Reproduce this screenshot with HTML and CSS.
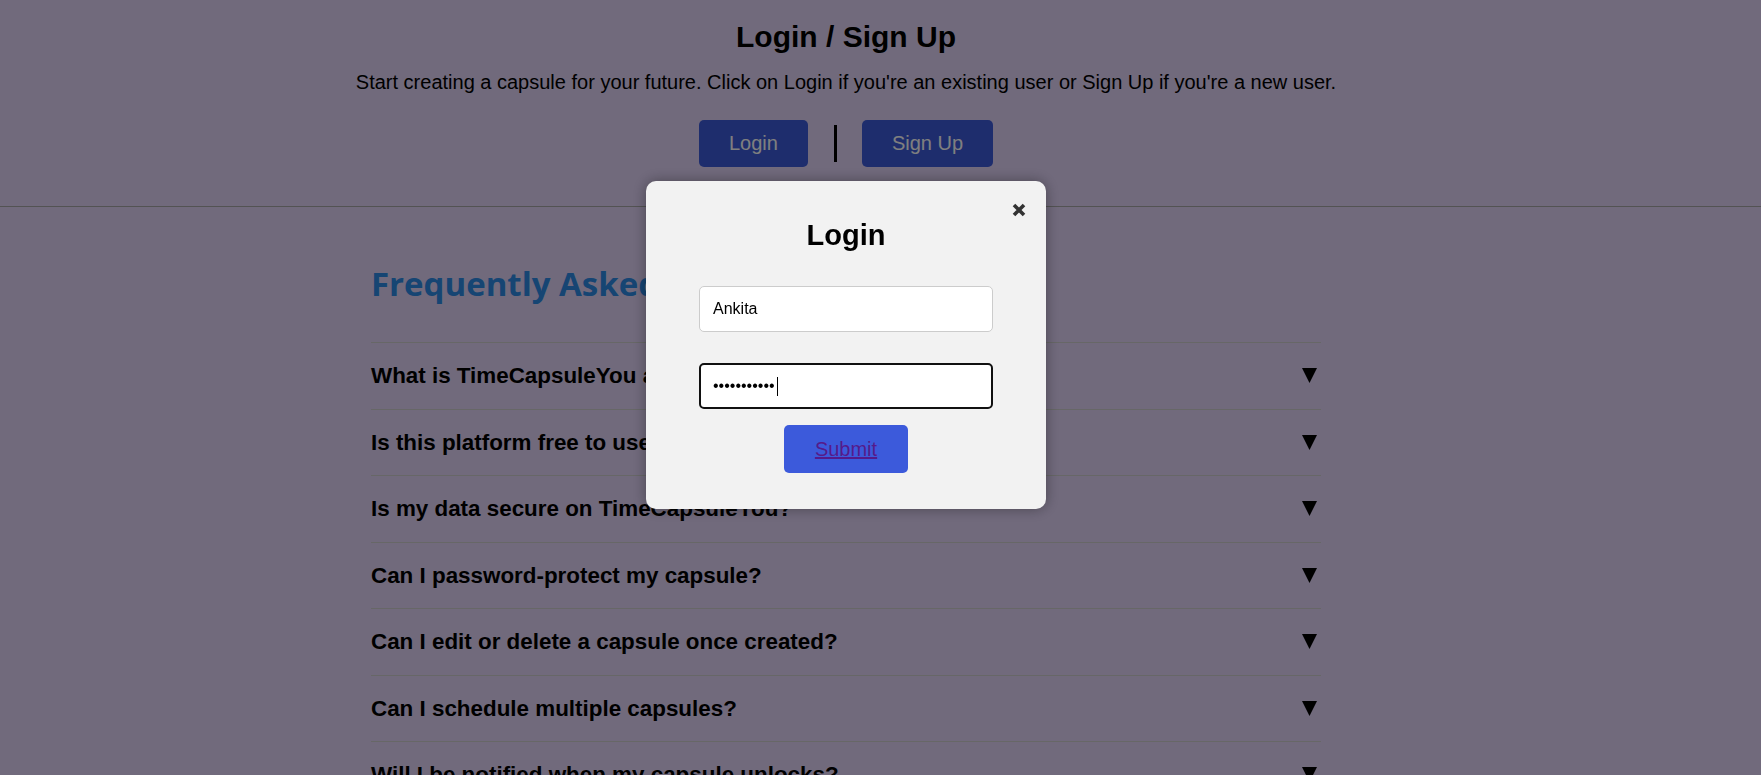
FILE: index.html
```html
<!DOCTYPE html>
<html lang="en">
<head>
<meta charset="utf-8">
<title>TimeCapsuleYou - Login / Sign Up</title>
<link rel="stylesheet" href="styles.css">
</head>
<body>
<div class="page-col">
  <header class="auth">
    <h1 class="auth-title">Login / Sign Up</h1>
    <p class="auth-text">Start creating a capsule for your future. Click on Login if you're an existing user or Sign Up if you're a new user.</p>
    <div class="auth-actions">
      <button class="btn" type="button">Login</button>
      <span class="divider"></span>
      <button class="btn" type="button">Sign Up</button>
    </div>
  </header>
</div>
<hr class="rule">
<div class="page-col">
  <section class="faq">
    <h2 class="faq-title">Frequently Asked Questions</h2>
    <div class="faq-item"><span class="faq-q">What is TimeCapsuleYou and how does it work?</span><svg class="faq-arrow" viewBox="0 0 15 15" width="15" height="15"><polygon points="0,0 15,0 7.5,15" fill="#000"/></svg></div>
    <div class="faq-item"><span class="faq-q">Is this platform free to use?</span><svg class="faq-arrow" viewBox="0 0 15 15" width="15" height="15"><polygon points="0,0 15,0 7.5,15" fill="#000"/></svg></div>
    <div class="faq-item"><span class="faq-q">Is my data secure on TimeCapsuleYou?</span><svg class="faq-arrow" viewBox="0 0 15 15" width="15" height="15"><polygon points="0,0 15,0 7.5,15" fill="#000"/></svg></div>
    <div class="faq-item"><span class="faq-q">Can I password-protect my capsule?</span><svg class="faq-arrow" viewBox="0 0 15 15" width="15" height="15"><polygon points="0,0 15,0 7.5,15" fill="#000"/></svg></div>
    <div class="faq-item"><span class="faq-q">Can I edit or delete a capsule once created?</span><svg class="faq-arrow" viewBox="0 0 15 15" width="15" height="15"><polygon points="0,0 15,0 7.5,15" fill="#000"/></svg></div>
    <div class="faq-item"><span class="faq-q">Can I schedule multiple capsules?</span><svg class="faq-arrow" viewBox="0 0 15 15" width="15" height="15"><polygon points="0,0 15,0 7.5,15" fill="#000"/></svg></div>
    <div class="faq-item"><span class="faq-q">Will I be notified when my capsule unlocks?</span><svg class="faq-arrow" viewBox="0 0 15 15" width="15" height="15"><polygon points="0,0 15,0 7.5,15" fill="#000"/></svg></div>
  </section>
</div>

<div class="overlay">
  <div class="modal-frame">
    <div class="modal">
      <button class="modal-close" type="button" aria-label="Close">
        <svg viewBox="0 0 14 14" width="14" height="14"><path d="M2 2 L12 12 M12 2 L2 12" stroke="#333" stroke-width="3.6" stroke-linecap="butt"/></svg>
      </button>
      <h2 class="modal-title">Login</h2>
      <form class="modal-form">
        <input class="field" type="text" value="Ankita">
        <div class="field-wrap">
          <input class="field field-focused" type="password" value="abcdefghijk">
          <span class="caret"></span>
        </div>
        <button class="submit" type="button"><a class="submit-link" href="#">Submit</a></button>
      </form>
    </div>
  </div>
</div>
</body>
</html>
```

FILE: styles.css
```css
html, body {
  margin: 0;
  padding: 0;
}

body {
  background: #e2d4f8;
  font-family: "Liberation Sans", Arial, sans-serif;
  color: #000;
  overflow: hidden;
  height: 775px;
}

.page-col {
  width: 1692px;
}

.auth {
  padding-top: 20px;
  display: flex;
  flex-direction: column;
  align-items: center;
}

.auth-title {
  margin: 0;
  font-size: 30px;
  line-height: 34px;
  font-weight: 700;
}

.auth-text {
  margin: 17px 0 0;
  font-size: 20px;
  line-height: 23px;
}

.auth-actions {
  margin-top: 26px;
  display: flex;
  align-items: center;
}

.btn {
  font-family: "Liberation Sans", Arial, sans-serif;
  font-size: 20px;
  line-height: 23px;
  padding: 12px 30px;
  border: none;
  border-radius: 5px;
  background: #3c5adb;
  color: #fff;
}

.divider {
  display: block;
  width: 3px;
  height: 37px;
  margin: 0 25px 0 26px;
  background: #000;
}

.rule {
  margin: 39px 0 0;
  border: none;
  border-top: 1px solid #a6a6a6;
  height: 0;
}

.faq {
  width: 950px;
  margin: 0 auto;
  padding-top: 55px;
}

.faq-title {
  margin: 0 0 36px;
  font-family: "Open Sans", "Noto Sans", sans-serif;
  font-size: 33px;
  line-height: 44px;
  font-weight: 700;
  color: #2c8ae6;
}

.faq-item {
  display: flex;
  align-items: center;
  justify-content: space-between;
  border-top: 1px solid #cecece;
  padding: 20px 4px 20px 0;
}

.faq-q {
  font-size: 22.4px;
  line-height: 25.5px;
  font-weight: 700;
}

.faq-arrow {
  display: block;
  flex: none;
}

/* modal */
.overlay {
  position: fixed;
  inset: 0;
  background: rgba(0, 0, 0, 0.5);
}

.modal-frame {
  width: 1692px;
  padding-top: 181px;
  display: flex;
  justify-content: center;
}

.modal {
  position: relative;
  width: 400px;
  box-sizing: border-box;
  padding: 20px 53px 36px;
  background: #f2f2f2;
  border-radius: 10px;
  box-shadow: 0 0 14px rgba(0, 0, 0, 0.35);
}

.modal-close {
  position: absolute;
  top: 22px;
  right: 20px;
  width: 14px;
  height: 14px;
  padding: 0;
  border: none;
  background: none;
  display: block;
}

.modal-close svg {
  display: block;
}

.modal-title {
  margin: 18px 0 0;
  text-align: center;
  font-size: 29px;
  line-height: 33px;
  font-weight: 700;
}

.modal-form {
  margin-top: 34px;
  display: flex;
  flex-direction: column;
  align-items: center;
}

.field {
  display: block;
  box-sizing: border-box;
  width: 294px;
  height: 46px;
  margin: 0;
  padding: 0 13px;
  border: 1px solid #cccccc;
  border-radius: 5px;
  background: #fff;
  font-family: "Liberation Sans", Arial, sans-serif;
  font-size: 16px;
  color: #000;
  outline: none;
}

.field-wrap {
  position: relative;
  margin-top: 31px;
}

.field-focused {
  border: 2px solid #111;
  padding: 0 12px;
}

.caret {
  position: absolute;
  left: 78px;
  top: 14px;
  width: 1px;
  height: 19px;
  background: #000;
}

.submit {
  margin-top: 16px;
  padding: 12px 31px;
  border: none;
  border-radius: 5px;
  background: #3c5adb;
  font-family: "Liberation Sans", Arial, sans-serif;
  font-size: 20px;
  line-height: 24px;
}

.submit-link {
  color: #551a8b;
  text-decoration: underline;
}
```
